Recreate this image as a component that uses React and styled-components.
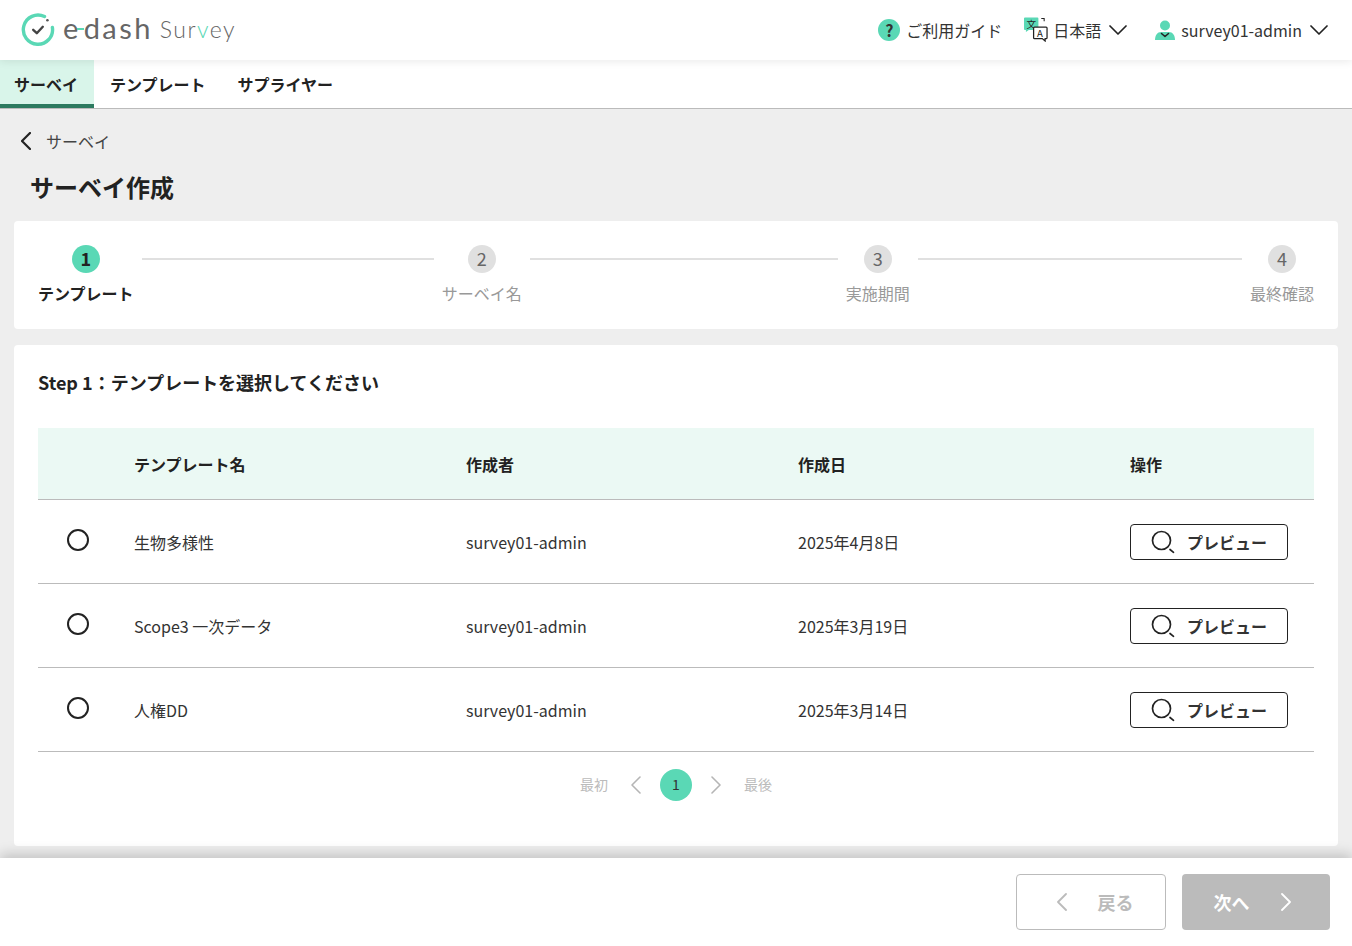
import React from 'react';
import styled, { createGlobalStyle } from 'styled-components';

const GlobalStyle = createGlobalStyle`
  * {
    box-sizing: border-box;
  }
  html, body {
    margin: 0;
    padding: 0;
    height: 100%;
    background: #eeeeee;
    color: #222222;
    font-family: "Noto Sans CJK JP", "Noto Sans", sans-serif;
  }
  #root {
    height: 100%;
  }
`;

const steps = [
  { no: 1, label: 'テンプレート', active: true, line: 292 },
  { no: 2, label: 'サーベイ名', line: 308 },
  { no: 3, label: '実施期間', line: 324 },
  { no: 4, label: '最終確認' },
];

const templates = [
  { name: '生物多様性', author: 'survey01-admin', date: '2025年4月8日' },
  { name: 'Scope3 一次データ', author: 'survey01-admin', date: '2025年3月19日' },
  { name: '人権DD', author: 'survey01-admin', date: '2025年3月14日' },
];

const LogoMark = () => (
  <svg width="34" height="34" viewBox="0 0 34 34" fill="none">
    <path d="M23.5 3.6A14.6 14.6 0 1 0 31.4 14.5" stroke="#5ad8b5" strokeWidth="3.4" strokeLinecap="round" />
    <circle cx="26.4" cy="7.2" r="1.3" fill="#555" />
    <path d="M12.2 16.8l3.6 3.4 6-6.4" stroke="#444" strokeWidth="2.4" strokeLinecap="round" strokeLinejoin="round" />
  </svg>
);

const TranslateIcon = () => (
  <svg width="24" height="25" viewBox="0 0 25 25" fill="none">
    <path d="M0 1a1 1 0 0 1 1-1h13a1 1 0 0 1 1 1v12H5l-3 2v-2H1a1 1 0 0 1-1-1z" fill="#5ad8b5" />
    <IconGlyph x="2.500" y="10.500" fontSize="10">文</IconGlyph>
    <path d="M18 1h3v3" stroke="#222" strokeWidth="1.100" />
    <path d="M11 10h12a1 1 0 0 1 1 1v10a1 1 0 0 1-1 1h-1v2.500l-3-2.500h-8a1 1 0 0 1-1-1V11a1 1 0 0 1 1-1z" stroke="#222" strokeWidth="1.300" fill="#fff" />
    <IconGlyph x="13.500" y="20" fontSize="10">A</IconGlyph>
  </svg>
);

const UserIcon = () => (
  <svg width="20" height="20" viewBox="0 0 20 20" fill="none">
    <circle cx="10" cy="5.500" r="5" fill="#5ad8b5" />
    <path d="M0 20c0-5 2.500-8 6-8h8c3.500 0 6 3 6 8z" fill="#5ad8b5" />
    <path d="M6.500 13.500l3.500 3 3.500-3" stroke="#222" strokeWidth="1.600" strokeLinecap="round" strokeLinejoin="round" />
  </svg>
);

const SearchIcon = () => (
  <svg width="24" height="24" viewBox="0 0 24 24" fill="none">
    <circle cx="10.500" cy="10.500" r="9" stroke="#222" strokeWidth="1.700" />
    <path d="M19 19.500l3.500 2.800" stroke="#222" strokeWidth="1.700" strokeLinecap="round" />
  </svg>
);

// Thin chevrons: the reference's are wider than the icon packs' at this stroke
const ChevronDown = () => (
  <svg width="18" height="10" viewBox="0 0 18 10" fill="none">
    <path d="M1 1l8 8 8-8" stroke="#222" strokeWidth="1.700" strokeLinecap="round" strokeLinejoin="round" />
  </svg>
);

const ChevronLeft = ({ color = '#222', width = 1.7 }) => (
  <svg width="10" height="18" viewBox="0 0 10 18" fill="none">
    <path d="M9 1L1 9l8 8" stroke={color} strokeWidth={width} strokeLinecap="round" strokeLinejoin="round" />
  </svg>
);

const ChevronRight = ({ color = '#222', width = 1.7 }) => (
  <svg width="10" height="18" viewBox="0 0 10 18" fill="none">
    <path d="M1 1l8 8-8 8" stroke={color} strokeWidth={width} strokeLinecap="round" strokeLinejoin="round" />
  </svg>
);

const App = () => (
  <Page>
    <GlobalStyle />
    <Header>
      <Logo>
        <LogoMark />
        <LogoName>e<LogoDash />dash</LogoName>
        <LogoProduct>Sur<LogoAccent>v</LogoAccent>ey</LogoProduct>
      </Logo>
      <HeaderMenu>
        <GuideLink>
          <HelpBadge>?</HelpBadge>
          ご利用ガイド
        </GuideLink>
        <LanguageMenu>
          <TranslateIcon />
          日本語
          <ChevronDown />
        </LanguageMenu>
        <UserMenu>
          <UserIcon />
          survey01-admin
          <ChevronDown />
        </UserMenu>
      </HeaderMenu>
    </Header>

    <Nav>
      <NavItem $active>サーベイ</NavItem>
      <NavItem>テンプレート</NavItem>
      <NavItem>サプライヤー</NavItem>
    </Nav>

    <Main>
      <BackLink>
        <ChevronLeft width={2.2} />
        サーベイ
      </BackLink>
      <Title>サーベイ作成</Title>

      <StepperCard>
        {steps.map((step) => (
          <React.Fragment key={step.no}>
            <Step>
              <StepCircle $active={step.active}>{step.no}</StepCircle>
              <StepLabel $active={step.active}>{step.label}</StepLabel>
            </Step>
            {step.line && <StepLine $grow={step.line} />}
          </React.Fragment>
        ))}
      </StepperCard>

      <ContentCard>
        <SectionTitle>Step 1：テンプレートを選択してください</SectionTitle>
        <Table>
          <thead>
            <tr>
              <HeadCell $width={96} />
              <HeadCell $width={332}>テンプレート名</HeadCell>
              <HeadCell $width={332}>作成者</HeadCell>
              <HeadCell $width={332}>作成日</HeadCell>
              <HeadCell>操作</HeadCell>
            </tr>
          </thead>
          <tbody>
            {templates.map((row) => (
              <tr key={row.name}>
                <RadioCell><Radio /></RadioCell>
                <BodyCell>{row.name}</BodyCell>
                <BodyCell>{row.author}</BodyCell>
                <BodyCell>{row.date}</BodyCell>
                <BodyCell>
                  <PreviewButton>
                    <SearchIcon />
                    プレビュー
                  </PreviewButton>
                </BodyCell>
              </tr>
            ))}
          </tbody>
        </Table>
        <Pagination>
          <PageEdge>最初</PageEdge>
          <PageArrow><ChevronLeft color="#b5b5b5" width={1.6} /></PageArrow>
          <PageCurrent>1</PageCurrent>
          <PageArrow><ChevronRight color="#b5b5b5" width={1.6} /></PageArrow>
          <PageEdge>最後</PageEdge>
        </Pagination>
      </ContentCard>
    </Main>

    <Footer>
      <BackButton>
        <ChevronLeft color="#bbbbbb" width={1.8} />
        戻る
      </BackButton>
      <NextButton>
        次へ
        <ChevronRight color="#ffffff" width={1.8} />
      </NextButton>
    </Footer>
  </Page>
);

const Page = styled.div`
  height: 100vh;
  display: flex;
  flex-direction: column;
  overflow: hidden;
  background: #eeeeee;
`;

const Header = styled.header`
  height: 60px;
  flex: none;
  display: flex;
  align-items: center;
  justify-content: space-between;
  padding: 0 24px 0 21px;
  background: #fff;
  box-shadow: 0 2px 8px rgba(0, 0, 0, 0.08);
  position: relative;
  z-index: 1;
`;

const Logo = styled.div`
  display: flex;
  align-items: center;
  color: #666;
  font-family: Lato, "Noto Sans", sans-serif;
`;

const LogoName = styled.span`
  margin: 0 0 4px 8px;
  font-size: 29px;
  font-weight: 400;
  letter-spacing: 2.4px;
  line-height: 34px;
  display: flex;
  align-items: center;
`;

const LogoDash = styled.i`
  display: block;
  width: 7px;
  height: 1.500px;
  margin: 2px 0 0 -4px;
  background: #5ad8b5;
`;

const LogoProduct = styled.span`
  margin: 0 0 3px 7px;
  font-size: 23px;
  font-weight: 300;
  letter-spacing: 1.500px;
  line-height: 34px;
`;

const LogoAccent = styled.span`
  color: #5ad8b5;
`;

const HeaderMenu = styled.div`
  display: flex;
  align-items: center;
  font-size: 16px;
  color: #333;
`;

const GuideLink = styled.div`
  display: flex;
  align-items: center;
  gap: 6px;
`;

const HelpBadge = styled.span`
  width: 22px;
  height: 22px;
  border-radius: 50%;
  display: flex;
  align-items: center;
  justify-content: center;
  background: #5ad8b5;
  font-size: 16px;
  font-weight: 700;
`;

const IconGlyph = styled.text`
  fill: #222;
  font-family: "Noto Sans CJK JP", sans-serif;
`;

const LanguageMenu = styled.div`
  display: flex;
  align-items: center;
  margin-left: 22px;
  gap: 5px;

  svg:first-child {
    margin-top: -1px;
  }
  svg:last-child {
    margin-left: 3px;
  }
`;

const UserMenu = styled.div`
  display: flex;
  align-items: center;
  margin-left: 28px;
  gap: 6px;

  svg:last-child {
    margin-left: 2px;
  }
`;

const Nav = styled.nav`
  height: 49px;
  flex: none;
  display: flex;
  background: #fff;
  border-bottom: 1px solid #bbbbbb;
`;

const NavItem = styled.div`
  display: flex;
  align-items: center;
  padding: 4px 16px 0 ${(p) => (p.$active ? '14px' : '16px')};
  font-size: 16px;
  font-weight: 700;
  background: ${(p) => (p.$active ? '#d9f5ea' : 'transparent')};
  border-bottom: 4px solid ${(p) => (p.$active ? '#2c7a5f' : 'transparent')};
`;

const Main = styled.main`
  flex: 1;
  min-height: 0;
  padding: 0 14px;
`;

const BackLink = styled.div`
  display: flex;
  align-items: center;
  gap: 15px;
  height: 24px;
  margin-top: 20px;
  padding-left: 7px;
  font-size: 16px;
  color: #444;
`;

const Title = styled.h1`
  margin: 16px 0 0 16px;
  height: 36px;
  font-size: 24px;
  line-height: 36px;
  font-weight: 700;
  color: #222;
`;

const StepperCard = styled.section`
  display: flex;
  align-items: flex-start;
  margin-top: 16px;
  height: 108px;
  padding: 24px 24px 0;
  background: #fff;
  border-radius: 4px;
`;

const Step = styled.div`
  flex: none;
  display: flex;
  flex-direction: column;
  align-items: center;
`;

const StepCircle = styled.span`
  width: 28px;
  height: 28px;
  padding-bottom: 2px;
  border-radius: 50%;
  display: flex;
  align-items: center;
  justify-content: center;
  font-size: 18px;
  font-weight: ${(p) => (p.$active ? 700 : 400)};
  color: ${(p) => (p.$active ? '#222' : '#666')};
  background: ${(p) => (p.$active ? '#5ad8b5' : '#e0e0e0')};
`;

const StepLabel = styled.span`
  margin-top: 8px;
  font-size: 16px;
  line-height: 24px;
  font-weight: ${(p) => (p.$active ? 700 : 400)};
  color: ${(p) => (p.$active ? '#222' : '#999')};
`;

const StepLine = styled.span`
  flex: ${(p) => p.$grow} 0 0;
  height: 2px;
  margin: 13px 8px 0;
  background: #e0e0e0;
`;

const ContentCard = styled.section`
  margin-top: 16px;
  height: 501px;
  padding: 23px 24px 0;
  background: #fff;
  border-radius: 4px;
`;

const SectionTitle = styled.h2`
  margin: 0;
  font-size: 18px;
  line-height: 28px;
  font-weight: 700;
  color: #222;
`;

const Table = styled.table`
  width: 100%;
  margin-top: 32px;
  border-collapse: collapse;
  table-layout: fixed;
`;

const HeadCell = styled.th`
  width: ${(p) => (p.$width ? `${p.$width}px` : 'auto')};
  height: 71px;
  padding: 1px 0 0;
  text-align: left;
  font-size: 16px;
  font-weight: 700;
  background: #ebf9f4;
  border-bottom: 1px solid #bbbbbb;
`;

const BodyCell = styled.td`
  height: 84px;
  padding: 2px 0 0;
  font-size: 16px;
  color: #333;
  border-bottom: 1px solid #bbbbbb;
`;

const RadioCell = styled(BodyCell)`
  padding: 0 0 2px 29px;
`;

const Radio = styled.span`
  display: block;
  width: 22px;
  height: 22px;
  border: 2px solid #222;
  border-radius: 50%;
`;

const PreviewButton = styled.button`
  width: 158px;
  height: 36px;
  padding: 0 0 0 20px;
  display: flex;
  align-items: center;
  gap: 12px;
  background: #fff;
  border: 1px solid #222;
  border-radius: 4px;
  font-family: inherit;
  font-size: 16px;
  font-weight: 700;
  color: #333;
`;

const Pagination = styled.div`
  display: flex;
  align-items: center;
  justify-content: center;
  margin-top: 17px;
`;

const PageEdge = styled.span`
  padding-bottom: 2px;
  font-size: 14px;
  color: #bbbbbb;
`;

const PageArrow = styled.span`
  display: flex;
  margin: 0 19px 0 23px;

  &:nth-child(4) {
    margin: 0 23px 0 19px;
  }
`;

const PageCurrent = styled.span`
  width: 32px;
  height: 32px;
  padding-bottom: 2px;
  border-radius: 50%;
  display: flex;
  align-items: center;
  justify-content: center;
  font-size: 14px;
  color: #333;
  background: #5ad8b5;
`;

const Footer = styled.footer`
  position: absolute;
  left: 0;
  right: 0;
  bottom: 0;
  height: 88px;
  display: flex;
  justify-content: flex-end;
  align-items: flex-start;
  gap: 16px;
  padding: 16px 22px 0 0;
  background: #fff;
  box-shadow: 0 -4px 12px rgba(0, 0, 0, 0.18);
`;

const BackButton = styled.button`
  width: 150px;
  height: 56px;
  padding: 0 0 0 8px;
  display: flex;
  align-items: center;
  justify-content: center;
  gap: 31px;
  background: #fff;
  border: 1px solid #bbbbbb;
  border-radius: 4px;
  font-family: inherit;
  font-size: 18px;
  font-weight: 700;
  color: #bbbbbb;
`;

const NextButton = styled.button`
  width: 148px;
  height: 56px;
  padding: 0 8px 0 0;
  display: flex;
  align-items: center;
  justify-content: center;
  gap: 31px;
  background: #bbbbbb;
  border: 0;
  border-radius: 4px;
  font-family: inherit;
  font-size: 18px;
  font-weight: 700;
  color: #fff;
`;

export default App;
